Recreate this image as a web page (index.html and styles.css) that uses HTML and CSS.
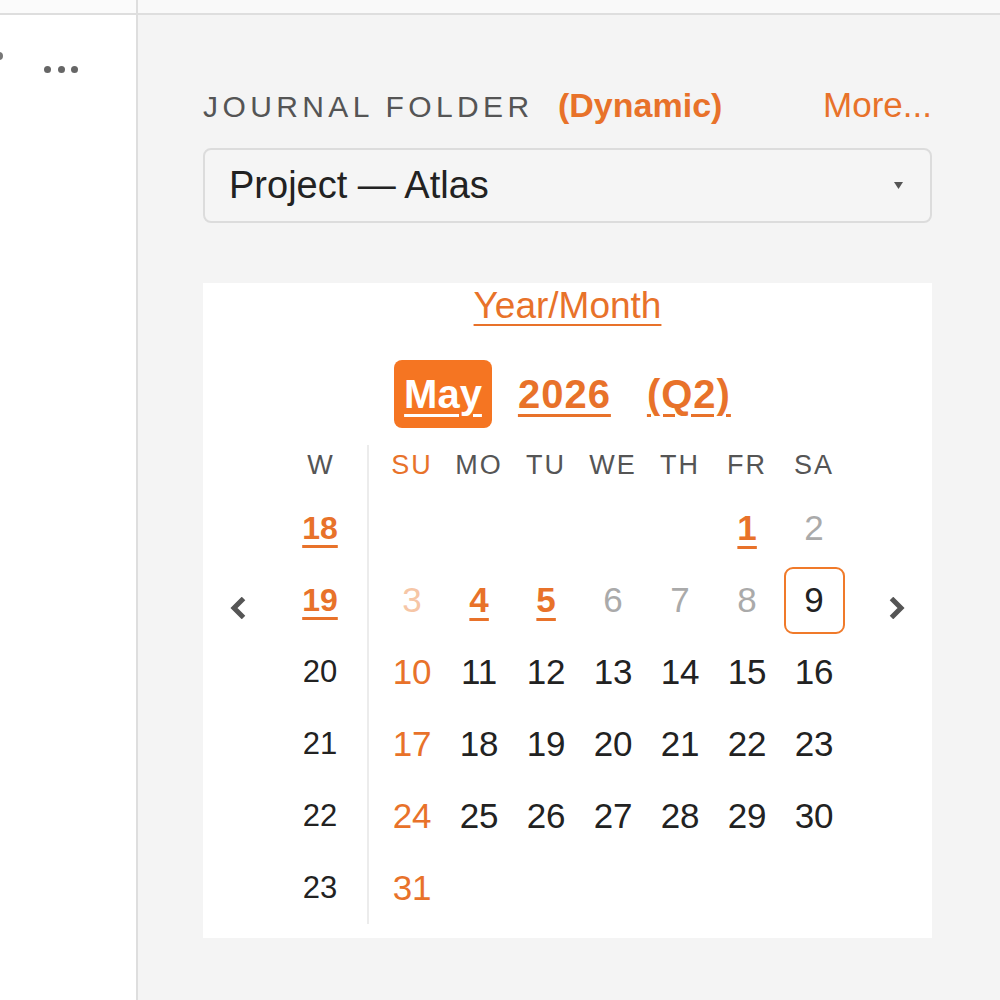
FILE: index.html
```html
<!DOCTYPE html>
<html lang="en">
<head>
    <meta charset="UTF-8">
    <meta name="viewport" content="width=device-width, initial-scale=1.0">
    <title>Journal Calendar</title>
    <link rel="stylesheet" href="styles.css">
</head>
<body>
    <div class="app">
        <aside class="sidebar">
            <div class="topbar"></div>
            <div class="side-body">
                <span class="edge-dot"></span>
                <div class="more-dots"><span></span><span></span><span></span></div>
            </div>
        </aside>

        <main class="panel">
            <div class="topbar"></div>
            <div class="panel-body">
                <div class="label-row">
                    <div class="label-left">
                        <span class="label">Journal folder</span>
                        <span class="dynamic">(Dynamic)</span>
                    </div>
                    <a class="more">More...</a>
                </div>

                <div class="select">
                    <span>Project — Atlas</span>
                    <svg class="caret" width="9" height="7" viewBox="0 0 9 7"><polygon points="0,0 9,0 4.5,7" fill="#555"/></svg>
                </div>

                <div class="calendar">
                    <div class="cal-title"><a>Year/Month</a></div>
                    <div class="cal-period">
                        <a class="period active">May</a>
                        <a class="period">2026</a>
                        <a class="period">(Q2)</a>
                    </div>

                    <div class="cal-body">
                        <div class="nav">
                            <svg width="16" height="22" viewBox="0 0 16 22"><path d="M13.5 1.5 L4 11 L13.5 20.5" fill="none" stroke="#555" stroke-width="5"/></svg>
                        </div>

                        <div class="weeks">
                            <div class="head">W</div>
                            <div class="week link">18</div>
                            <div class="week link">19</div>
                            <div class="week">20</div>
                            <div class="week">21</div>
                            <div class="week">22</div>
                            <div class="week">23</div>
                        </div>

                        <div class="days">
                            <div class="day-head">
                                <div class="head sun">SU</div>
                                <div class="head">MO</div>
                                <div class="head">TU</div>
                                <div class="head">WE</div>
                                <div class="head">TH</div>
                                <div class="head">FR</div>
                                <div class="head">SA</div>
                            </div>
                            <div class="day-grid">
                                <div></div><div></div><div></div><div></div><div></div>
                                <div class="day link">1</div>
                                <div class="day past">2</div>

                                <div class="day faded">3</div>
                                <div class="day link">4</div>
                                <div class="day link">5</div>
                                <div class="day past">6</div>
                                <div class="day past">7</div>
                                <div class="day past">8</div>
                                <div class="day"><span class="today">9</span></div>

                                <div class="day sun">10</div>
                                <div class="day">11</div>
                                <div class="day">12</div>
                                <div class="day">13</div>
                                <div class="day">14</div>
                                <div class="day">15</div>
                                <div class="day">16</div>

                                <div class="day sun">17</div>
                                <div class="day">18</div>
                                <div class="day">19</div>
                                <div class="day">20</div>
                                <div class="day">21</div>
                                <div class="day">22</div>
                                <div class="day">23</div>

                                <div class="day sun">24</div>
                                <div class="day">25</div>
                                <div class="day">26</div>
                                <div class="day">27</div>
                                <div class="day">28</div>
                                <div class="day">29</div>
                                <div class="day">30</div>

                                <div class="day sun">31</div>
                            </div>
                        </div>

                        <div class="nav next">
                            <svg width="16" height="22" viewBox="0 0 16 22"><path d="M2.5 1.5 L12 11 L2.5 20.5" fill="none" stroke="#555" stroke-width="5"/></svg>
                        </div>
                    </div>
                </div>
            </div>
        </main>
    </div>
</body>
</html>
```

FILE: styles.css
```css
body {
    margin: 0;
    font-family: "Liberation Sans", Arial, sans-serif;
    color: #222;
    background: #f4f4f4;
}
.app {
    display: flex;
    height: 1000px;
}
.topbar {
    height: 13px;
    background: #f9f9f9;
    border-bottom: 2px solid #dedede;
}

/* left column */
.sidebar {
    flex-shrink: 0;
    width: 136px;
    background: #fff;
    border-right: 2px solid #dedede;
    overflow: hidden;
}
.sidebar .topbar {
    background: #fbfbfb;
}
.side-body {
    padding-top: 37px;
}
.edge-dot {
    display: block;
    width: 8px;
    height: 8px;
    margin-left: -5px;
    border-radius: 50%;
    background: #777;
}
.more-dots {
    display: flex;
    gap: 6.5px;
    margin-top: 6px;
    padding-left: 44px;
}
.more-dots span {
    width: 7px;
    height: 7px;
    border-radius: 50%;
    background: #666;
}

/* right panel */
.panel {
    flex: 1;
    min-width: 0;
}
.panel-body {
    padding: 70px 68px 0 65px;
}
.label-row {
    display: flex;
    justify-content: space-between;
    align-items: baseline;
    height: 40px;
    line-height: 40px;
}
.label {
    font-size: 30px;
    letter-spacing: 4.4px;
    text-transform: uppercase;
    color: #555;
}
.dynamic {
    margin-left: 20px;
    font-size: 34px;
    font-weight: bold;
    color: #e8722a;
}
.more {
    font-size: 35px;
    color: #e8722a;
}
.select {
    display: flex;
    align-items: center;
    justify-content: space-between;
    height: 71px;
    margin-top: 23px;
    padding: 0 27px 0 24px;
    border: 2px solid #dcdcdc;
    border-radius: 8px;
    background: #f5f5f5;
    font-size: 38px;
    color: #222;
}

/* calendar card */
.calendar {
    margin-top: 60px;
    padding: 3px 0 14px;
    background: #fff;
}
.cal-title {
    text-align: center;
    font-size: 37px;
    line-height: 40px;
}
.cal-title a,
.period,
.link {
    color: #e8722a;
    text-decoration: underline;
    text-decoration-thickness: 3px;
    text-underline-offset: 6px;
}
.cal-title a {
    text-decoration-thickness: 2px;
}
.cal-period {
    display: flex;
    justify-content: center;
    gap: 16px;
    margin-top: 34px;
}
.period {
    padding: 10px 10px;
    border-radius: 8px;
    font-size: 40px;
    font-weight: bold;
    line-height: 48px;
    letter-spacing: 1px;
}
.period.active {
    background: #f57522;
    color: #fff;
    letter-spacing: 0;
}
.cal-body {
    display: flex;
    margin-top: 17px;
}
.nav {
    width: 71px;
    padding-top: 152px;
    display: flex;
    justify-content: center;
    align-items: flex-start;
}
.nav.next {
    width: 70px;
}
.weeks {
    width: 94px;
    text-align: center;
}
.head {
    height: 40px;
    line-height: 40px;
    font-size: 27px;
    letter-spacing: 2px;
    color: #555;
    text-align: center;
}
.weeks .head {
    margin-bottom: 7px;
    letter-spacing: 0;
}
.week {
    height: 72px;
    line-height: 72px;
    font-size: 31px;
}
.week.link {
    font-size: 32px;
    font-weight: bold;
}
.days {
    padding: 0 15px 0 10px;
    border-left: 2px solid #ececec;
}
.day-head {
    display: grid;
    grid-template-columns: repeat(7, 67px);
    margin-bottom: 7px;
}
.day-grid {
    display: grid;
    grid-template-columns: repeat(7, 67px);
    grid-auto-rows: 72px;
}
.day {
    display: flex;
    align-items: center;
    justify-content: center;
    font-size: 35px;
}
.sun {
    color: #e8722a;
}
.day.link {
    font-weight: bold;
}
.day.past {
    color: #aaa;
}
.day.faded {
    color: #f6c6a6;
}
.today {
    display: flex;
    align-items: center;
    justify-content: center;
    width: 57px;
    height: 63px;
    border: 2px solid #f07a2a;
    border-radius: 9px;
}
```
